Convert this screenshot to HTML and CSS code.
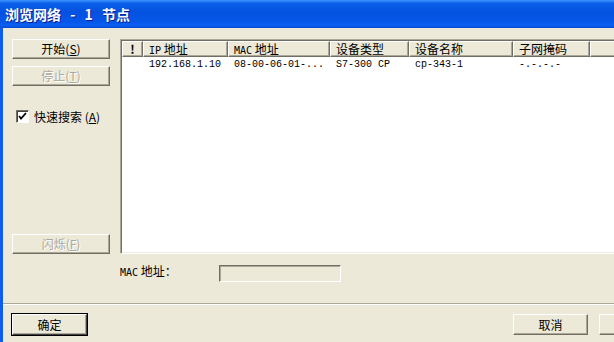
FILE: index.html
```html
<!DOCTYPE html>
<html lang="zh-CN">
<head>
  <meta charset="UTF-8">
  <title>浏览网络 - 1 节点</title>
  <link rel="stylesheet" href="styles.css">
</head>
<body>
  <div class="window">
    <div class="titlebar">浏览网络 - 1 节点</div>
    <div class="frame">
      <div class="main">
        <div class="side">
          <button class="btn">开始(<u>S</u>)</button>
          <button class="btn stop" disabled>停止(<u>T</u>)</button>
          <label class="check">
            <span class="box">
              <svg width="9" height="9" viewBox="0 0 9 9"><path d="M1 4 L3 6.5 L8 1" fill="none" stroke="#000" stroke-width="1.8"/></svg>
            </span>
            <span>快速搜索 (<u>A</u>)</span>
          </label>
          <button class="btn flash" disabled>闪烁(<u>F</u>)</button>
        </div>
        <div class="list">
          <div class="head">
            <div class="col c0 bang">!</div>
            <div class="col c1"><span class="en">IP</span> 地址</div>
            <div class="col c2"><span class="en">MAC</span> 地址</div>
            <div class="col c3">设备类型</div>
            <div class="col c4">设备名称</div>
            <div class="col c5">子网掩码</div>
            <div class="col c6"></div>
          </div>
          <div class="row">
            <div class="cell c0"></div>
            <div class="cell c1">192.168.1.10</div>
            <div class="cell c2">08-00-06-01-...</div>
            <div class="cell c3">S7-300 CP</div>
            <div class="cell c4">cp-343-1</div>
            <div class="cell c5">-.-.-.-</div>
          </div>
        </div>
      </div>
      <div class="macrow">
        <span class="maclabel"><span class="en">MAC</span> 地址：</span>
        <span class="field"></span>
      </div>
      <div class="sep"></div>
      <div class="footer">
        <button class="btn wide default">确定</button>
        <span class="spacer"></span>
        <button class="btn wide">取消</button>
        <button class="btn wide"></button>
      </div>
    </div>
  </div>
</body>
</html>
```

FILE: styles.css
```css
html, body {
  margin: 0;
  padding: 0;
  width: 614px;
  height: 342px;
  overflow: hidden;
  background-color: #ece9d8;
}
.window {
  width: 686px;
  font-family: "Noto Sans CJK SC", sans-serif;
  font-size: 12px;
  color: #000;
}
.titlebar {
  height: 28px;
  box-sizing: border-box;
  padding: 3px 0 0 5px;
  line-height: 22px;
  font-size: 14px;
  font-weight: bold;
  word-spacing: 6px;
  color: #fff;
  text-shadow: 1px 1px #0a1e8c;
  background: linear-gradient(to bottom, #3d95ff 0%, #0a5ee8 12%, #0451e0 45%, #0658ea 80%, #0b60f2 92%, #0644cc 100%);
}
.frame {
  border-left: 3px solid #0b5cef;
  padding-top: 11px;
  height: 314px;
  box-sizing: border-box;
}
.main {
  display: flex;
  height: 215px;
}
.side {
  width: 98px;
  margin-left: 9px;
  margin-right: 10px;
  display: flex;
  flex-direction: column;
}
.btn {
  height: 20px;
  padding: 0;
  margin: 0;
  font-family: "Noto Sans CJK SC", sans-serif;
  font-size: 12px;
  line-height: 16px;
  color: #000;
  background-color: #ece9d8;
  border: 1px solid;
  border-color: #fff #716f64 #716f64 #fff;
  box-shadow: inset -1px -1px #aca899;
}
.btn:disabled {
  color: #aca899;
  text-shadow: 1px 1px #fff;
}
.stop {
  margin-top: 7px;
}
.check {
  display: flex;
  align-items: center;
  gap: 5px;
  margin-top: 24px;
  margin-left: 4px;
  height: 13px;
  line-height: 13px;
}
.box {
  width: 11px;
  height: 11px;
  background-color: #fff;
  border: 1px solid;
  border-color: #716f64 #fff #fff #716f64;
  box-shadow: inset 1px 1px #404040;
  display: flex;
  align-items: center;
  justify-content: center;
}
.flash {
  margin-top: auto;
}
.list {
  flex: 1;
  background-color: #fff;
  border: 1px solid;
  border-color: #aca899 #fff #fff #aca899;
  box-shadow: inset 1px 1px #716f64, inset -1px -1px #f1efe2;
  padding: 1px 0 0 1px;
}
.head, .row {
  display: flex;
}
.col {
  height: 16px;
  box-sizing: border-box;
  line-height: 14px;
  padding-left: 5px;
  background-color: #ece9d8;
  border: 1px solid;
  border-color: #fff #716f64 #716f64 #fff;
  box-shadow: inset -1px -1px #aca899;
  white-space: nowrap;
  overflow: hidden;
}
.bang {
  font-weight: bold;
  text-align: center;
  padding-left: 0;
}
.c0 { width: 21px; }
.c1 { width: 85px; }
.c2 { width: 102px; }
.c3 { width: 79px; }
.c4 { width: 104px; }
.c5 { width: 77px; }
.col.c6 { flex: 1; }
.cell {
  box-sizing: border-box;
  height: 15px;
  line-height: 15px;
  padding-left: 6px;
  font-family: "Liberation Mono", monospace;
  font-size: 10px;
  white-space: nowrap;
}
.en {
  font-family: "DejaVu Sans Mono", monospace;
  font-size: 10px;
}
.macrow {
  height: 49px;
  box-sizing: border-box;
  padding-top: 11px;
  display: flex;
  align-items: flex-start;
}
.maclabel {
  margin-left: 117px;
  width: 99px;
  height: 12px;
  line-height: 12px;
}
.field {
  width: 120px;
  height: 15px;
  background-color: #ece9d8;
  border: 1px solid;
  border-color: #716f64 #fff #fff #716f64;
  box-shadow: inset 1px 1px #aca899;
}
.sep {
  height: 1px;
  background-color: #aca899;
  border-bottom: 1px solid #fff;
}
.footer {
  display: flex;
  padding: 9px 12px 0 9px;
  gap: 11px;
}
.spacer {
  flex: 1;
}
.wide {
  width: 75px;
  height: 21px;
}
.default {
  outline: 1px solid #000;
  outline-offset: 0;
  border-color: #fff #404040 #404040 #fff;
}
```
